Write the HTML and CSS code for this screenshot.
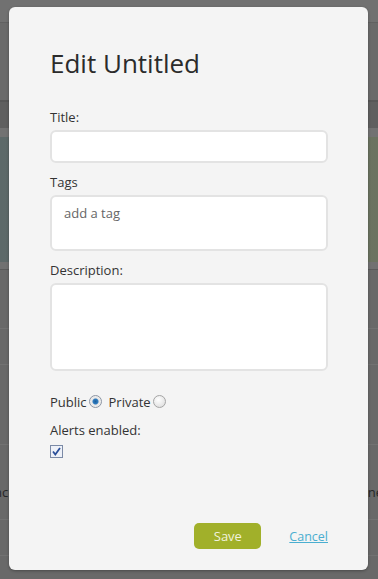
FILE: index.html
```html
<!DOCTYPE html>
<html lang="en">
<head>
  <meta charset="UTF-8" />
  <title>Edit Untitled</title>
  <meta name="viewport" content="width=device-width, initial-scale=1.0" />
  <link rel="stylesheet" href="styles.css">
</head>
<body>
  <div class="backdrop">
    <div class="bg-top"></div>
    <div class="bg-bar"></div>
    <div class="bg-strip"></div>
    <div class="bg-banner"></div>
    <div class="bg-strip"></div>
    <div class="bg-row"></div>
    <div class="bg-row"></div>
    <div class="bg-row wide"></div>
    <div class="bg-row tall"><span>nc</span><span>ne</span></div>
    <div class="bg-row"></div>
  </div>

  <div class="modal">
    <h1>Edit Untitled</h1>

    <label for="title">Title:</label>
    <input type="text" id="title" class="field">

    <label for="tags">Tags</label>
    <div id="tags" class="field tags-box">add a tag</div>

    <label for="desc">Description:</label>
    <textarea id="desc" class="field desc-box"></textarea>

    <div class="privacy">
      <span>Public</span><span class="radio on"></span>
      <span class="private">Private</span><span class="radio"></span>
    </div>

    <div class="alerts">Alerts enabled:</div>
    <svg class="check" width="13" height="13" viewBox="0 0 13 13">
      <rect x="0.5" y="0.5" width="12" height="12" fill="#eef1f8" stroke="#7b8aa6"/>
      <path d="M3 6.5 L5.3 9.5 L10 3" fill="none" stroke="#2a4f9a" stroke-width="1.8"/>
    </svg>

    <div class="actions">
      <button class="save">Save</button>
      <a href="#" class="cancel">Cancel</a>
    </div>
  </div>
</body>
</html>
```

FILE: styles.css
```css
body {
  margin: 0;
  padding: 0;
  font-family: "Open Sans", sans-serif;
  background: #696969;
  height: 579px;
  overflow: hidden;
}
.backdrop {
  display: flex;
  flex-direction: column;
}
.bg-top {
  height: 22px;
  background: #717171;
  border-bottom: 1px solid #616161;
}
.bg-bar {
  height: 77px;
  background: #6a6a6a;
  border-bottom: 2px solid #575757;
}
.bg-bar + .bg-strip {
  height: 26px;
  background: #5f5f5f;
  border-bottom: 9px solid #727272;
}
.bg-banner {
  height: 125px;
  background: linear-gradient(to right, #5d6969, #667068 50%, #6b7360);
}
.bg-banner + .bg-strip {
  height: 7px;
  background: #717171;
  border-bottom: 1px solid #5b5b5b;
}
.bg-row {
  height: 35px;
  background: #696969;
  border-bottom: 1px solid #727272;
  display: flex;
  justify-content: space-between;
  align-items: center;
  font-size: 13px;
  color: #262626;
}
.bg-strip + .bg-row {
  height: 58px;
}
.bg-row.wide {
  height: 79px;
}
.bg-row.tall {
  height: 54px;
  padding-top: 20px;
}
.bg-row span:first-child {
  margin-left: -6px;
}
.bg-row span:last-child {
  margin-right: -5px;
}
.modal {
  position: absolute;
  left: 9px;
  top: 7px;
  width: 359px;
  height: 563px;
  box-sizing: border-box;
  padding: 39px 41px 0 41px;
  background: #f4f4f4;
  border-radius: 6px;
  box-shadow: 0 1px 3px rgba(0,0,0,0.3);
}
h1 {
  margin: 0 0 28px 0;
  font-size: 26px;
  font-weight: normal;
  line-height: 34px;
  color: #2b2b2b;
}
label, .alerts {
  display: block;
  font-size: 13px;
  line-height: 18px;
  color: #333;
}
.field {
  display: block;
  box-sizing: border-box;
  width: 278px;
  margin: 4px 0 10px 0;
  border: 2px solid #e3e3e3;
  border-radius: 6px;
  background: #fff;
  font-family: "Open Sans", sans-serif;
  font-size: 13px;
  outline: none;
}
input.field {
  height: 33px;
}
.tags-box {
  height: 56px;
  padding: 7px 12px;
  color: #666;
}
.desc-box {
  height: 88px;
  resize: none;
  margin-bottom: 22px;
}
.privacy {
  display: flex;
  align-items: center;
  font-size: 13px;
  color: #333;
  margin-bottom: 10px;
}
.radio {
  display: inline-block;
  width: 11px;
  height: 11px;
  margin-left: 2px;
  border-radius: 50%;
  border: 1px solid #a5a5a5;
  background: radial-gradient(circle at 40% 35%, #ffffff, #d8d8d8);
  position: relative;
  top: -1px;
}
.radio.on {
  border-color: #8c95a3;
  background: radial-gradient(circle, #1a5f9c 0, #2f7cc0 2.5px, #e6e6e6 3.5px, #f7f7f7);
}
.private {
  margin-left: 7px;
}
.check {
  display: block;
  margin-top: 6px;
}
.actions {
  display: flex;
  align-items: center;
  justify-content: flex-end;
  margin-top: 65px;
  margin-right: -1px;
}
.save {
  width: 67px;
  height: 26px;
  border: none;
  border-radius: 5px;
  background: #a1b02a;
  color: #f1f3dd;
  font-family: "Open Sans", sans-serif;
  font-size: 13px;
  cursor: pointer;
}
.cancel {
  margin-left: 28px;
  font-size: 12.5px;
  color: #4aaed0;
}
```
